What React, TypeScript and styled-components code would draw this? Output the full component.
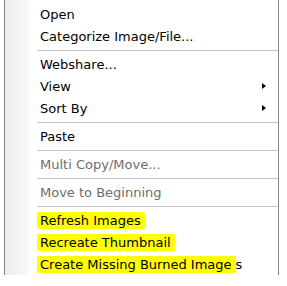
import React from 'react';
import styled, { createGlobalStyle } from 'styled-components';

const GlobalStyle = createGlobalStyle`
  body {
    margin: 0;
    background: #ffffff;
  }
`

const Menu = styled.ul`
  list-style: none;
  margin: 0 0 0 4px;
  padding: 3px 0 0 0;
  width: 273px;
  border-left: 1px solid #838383;
  border-right: 1px solid #838383;
  background: linear-gradient(to right, #ececec 0px, #f9f9f9 24px, #ffffff 25px);
  font-family: 'DejaVu Sans', Verdana, sans-serif;
  font-size: 13px;
`

const Item = styled.li<{ $disabled?: boolean }>`
  height: 22px;
  display: flex;
  align-items: center;
  justify-content: space-between;
  padding: 0 12px 0 35px;
  color: ${p => (p.$disabled ? '#6d6d6d' : '#000000')};
  white-space: nowrap;
`

const Separator = styled.li`
  height: 6px;
  display: flex;
  align-items: center;
  padding-left: 32px;
  &::after {
    content: '';
    flex: 1;
    height: 1px;
    background: #c4c4c4;
  }
`

const Highlight = styled.span`
  background: #ffff00;
  padding: 1px 4px 1px 3px;
  margin-left: -3px;
  border-radius: 2px;
`

const Arrow = styled.span`
  width: 0;
  height: 0;
  border-top: 3.5px solid transparent;
  border-bottom: 3.5px solid transparent;
  border-left: 4px solid #000000;
`

function App() {
  return (
    <>
      <GlobalStyle />
      <Menu>
        <Item>Open</Item>
        <Item>Categorize Image/File...</Item>
        <Separator />
        <Item>Webshare...</Item>
        <Item>View<Arrow /></Item>
        <Item>Sort By<Arrow /></Item>
        <Separator />
        <Item>Paste</Item>
        <Separator />
        <Item $disabled>Multi Copy/Move...</Item>
        <Separator />
        <Item $disabled>Move to Beginning</Item>
        <Separator />
        <Item><span><Highlight>Refresh Images</Highlight></span></Item>
        <Item><span><Highlight>Recreate Thumbnail</Highlight></span></Item>
        <Item><span><Highlight>Create Missing Burned Image</Highlight>s</span></Item>
      </Menu>
    </>
  );
}

export default App;
